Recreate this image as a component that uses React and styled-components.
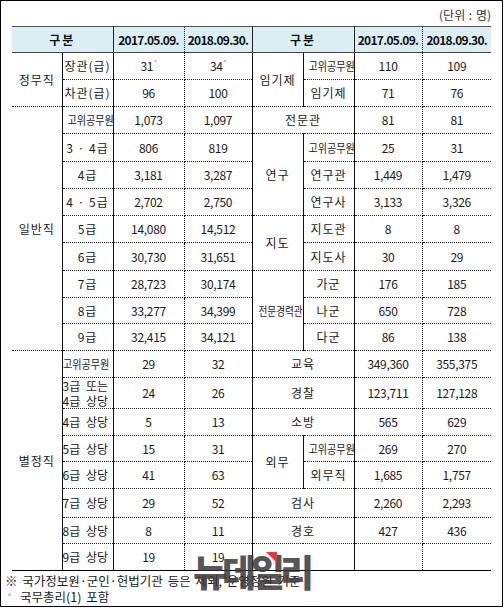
import React from "react";
import styled, { createGlobalStyle } from "styled-components";

// Global page reset

const GlobalStyle = createGlobalStyle`
  html, body {
    margin: 0;
    padding: 0;
    background: #fff;
  }
  body {
    font-family: "Noto Sans CJK KR", "Noto Sans", sans-serif;
    color: #1a1a1a;
  }
`;

// Styled Components

const Frame = styled.div`
  position: relative;
  box-sizing: border-box;
  width: 503px;
  height: 607px;
  border: 1px solid #000;
  overflow: hidden;
`;

const Unit = styled.div`
  height: 25px;
  width: 490px;
  font-size: 12px;
  line-height: 27px;
  text-align: right;
  color: #333;
  word-spacing: 1px;
`;

const Table = styled.table`
  margin-left: 11px;
  border-collapse: collapse;
  table-layout: fixed;
  width: 479px;
  font-size: 12px;
  line-height: 14px;
  border-top: 1px solid #555;
  border-bottom: 1px solid #000;
`;

const Col = styled.col`
  width: ${(p) => p.$w}px;
`;

const Row = styled.tr`
  height: ${(p) => p.$h}px;
`;

const Head = styled.th`
  padding: 0;
  background: #dbeef3;
  font-weight: bold;
  font-size: 12px;
  letter-spacing: ${(p) => p.$spacing ?? -0.7}px;
  color: #111;
  text-align: center;
  white-space: nowrap;
  border-bottom: 1px solid #444;
  border-right: ${(p) =>
    p.$right === "none" ? "none" : `1px ${p.$right} #222`};
`;

const Cell = styled.td`
  padding: 0;
  text-align: ${(p) => p.$align || "center"};
  vertical-align: middle;
  white-space: nowrap;
  overflow: visible;
  letter-spacing: ${(p) => p.$spacing || 0}px;
  word-spacing: ${(p) => (p.$align === "left" ? 3 : 0)}px;
  line-height: ${(p) => (p.$lines ? 15 : 14)}px;
  border-bottom: 1px dotted #222;
  border-right: ${(p) =>
    p.$right === "none" ? "none" : `1px ${p.$right} #111`};
`;

const Squeeze = styled.span`
  display: inline-block;
  letter-spacing: 0;
  transform: scaleX(${(p) => p.$scale || 0.84});
  transform-origin: ${(p) => (p.$align === "left" ? "left center" : "center")};
`;

const Mark = styled.sup`
  font-size: 9px;
  line-height: 0;
  vertical-align: 4px;
  margin-left: 1px;
`;

const Notes = styled.div`
  padding: 2px 0 0 4px;
  font-size: 12.5px;
  line-height: 16px;
  color: #1a1a1a;
  word-spacing: 2px;
`;

const SmallMark = styled.span`
  display: inline-block;
  width: 15px;
  padding-left: 3px;
  font-size: 10px;
  line-height: 12px;
  box-sizing: border-box;
`;

const Watermark = styled.div`
  position: absolute;
  left: 192px;
  top: 548px;
  font-size: 37px;
  font-weight: 900;
  letter-spacing: -5px;
  line-height: 44px;
  color: rgba(55, 55, 55, 0.85);
  pointer-events: none;
`;

const Wedge = styled.svg`
  position: absolute;
  left: 265px;
  top: 551px;
`;

// Table data

const heights = [27, 27, 27, 28, 27, 27, 27, 28, 27, 26, 27, 27, 31, 27, 26, 27, 29, 26, 27];

const leftRows = [
  { cat: "정무직", span: 2, sub: "장관(급)", a: "31", b: "34", mark: true },
  { sub: "차관(급)", a: "96", b: "100" },
  { cat: "일반직", span: 9, sub: "고위공무원", squeeze: true, a: "1,073", b: "1,097" },
  { sub: "3 · 4급", a: "806", b: "819" },
  { sub: "4급", a: "3,181", b: "3,287" },
  { sub: "4 · 5급", a: "2,702", b: "2,750" },
  { sub: "5급", a: "14,080", b: "14,512" },
  { sub: "6급", a: "30,730", b: "31,651" },
  { sub: "7급", a: "28,723", b: "30,174" },
  { sub: "8급", a: "33,277", b: "34,399" },
  { sub: "9급", a: "32,415", b: "34,121" },
  { cat: "별정직", span: 8, sub: "고위공무원", squeeze: true, left: true, a: "29", b: "32" },
  { sub: ["3급 또는", "4급 상당"], left: true, a: "24", b: "26" },
  { sub: "4급 상당", left: true, a: "5", b: "13" },
  { sub: "5급 상당", left: true, a: "15", b: "31" },
  { sub: "6급 상당", left: true, a: "41", b: "63" },
  { sub: "7급 상당", left: true, a: "29", b: "52" },
  { sub: "8급 상당", left: true, a: "8", b: "11" },
  { sub: "9급 상당", left: true, a: "19", b: "19" },
];

const rightRows = [
  { cat: "임기제", span: 2, sub: "고위공무원", squeeze: true, a: "110", b: "109" },
  { sub: "임기제", a: "71", b: "76" },
  { full: "전문관", a: "81", b: "81" },
  { cat: "연구", span: 3, sub: "고위공무원", squeeze: true, a: "25", b: "31" },
  { sub: "연구관", a: "1,449", b: "1,479" },
  { sub: "연구사", a: "3,133", b: "3,326" },
  { cat: "지도", span: 2, sub: "지도관", a: "8", b: "8" },
  { sub: "지도사", a: "30", b: "29" },
  { cat: "전문경력관", span: 3, catSqueeze: true, sub: "가군", a: "176", b: "185" },
  { sub: "나군", a: "650", b: "728" },
  { sub: "다군", a: "86", b: "138" },
  { full: "교육", a: "349,360", b: "355,375" },
  { full: "경찰", a: "123,711", b: "127,128" },
  { full: "소방", a: "565", b: "629" },
  { cat: "외무", span: 2, sub: "고위공무원", squeeze: true, a: "269", b: "270" },
  { sub: "외무직", a: "1,685", b: "1,757" },
  { full: "검사", a: "2,260", b: "2,293" },
  { full: "경호", a: "427", b: "436" },
  { full: "", a: "", b: "" },
];

// Component definition

function SubLabel({ item }) {
  if (Array.isArray(item.sub)) {
    return item.sub.map((line, i) => (
      <React.Fragment key={i}>
        {i > 0 && <br />}
        {line}
      </React.Fragment>
    ));
  }
  if (item.squeeze) {
    return (
      <Squeeze $align={item.left ? "left" : "center"}>{item.sub}</Squeeze>
    );
  }
  return item.sub;
}

function renderSide(item, side) {
  const cells = [];
  if (item.full !== undefined) {
    cells.push(
      <Cell key="full" colSpan={2} $right="solid" $spacing={1}>
        {item.full}
      </Cell>
    );
  } else {
    if (item.cat) {
      cells.push(
        <Cell key="cat" rowSpan={item.span} $right="solid" $spacing={item.catSqueeze ? 0 : 1}>
          {item.catSqueeze ? <Squeeze $scale={0.8}>{item.cat}</Squeeze> : item.cat}
        </Cell>
      );
    }
    cells.push(
      <Cell
        key="sub"
        $right="solid"
        $align={item.left ? "left" : "center"}
        $spacing={item.left ? 0 : 1}
        $lines={Array.isArray(item.sub)}
      >
        <SubLabel item={item} />
      </Cell>
    );
  }
  cells.push(
    <Cell key="a" $right="dotted" $spacing={-0.3}>
      {item.a}
      {item.mark && <Mark>˄</Mark>}
    </Cell>
  );
  cells.push(
    <Cell key="b" $right={side === "left" ? "solid" : "none"} $spacing={-0.3}>
      {item.b}
      {item.mark && <Mark>˄</Mark>}
    </Cell>
  );
  return cells;
}

function App() {
  return (
    <>
      <GlobalStyle />
      <Frame>
        <Unit>(단위 : 명)</Unit>
        <Table>
          <colgroup>
            <Col $w={50} />
            <Col $w={51} />
            <Col $w={71} />
            <Col $w={68} />
            <Col $w={51} />
            <Col $w={51} />
            <Col $w={68} />
            <Col $w={69} />
          </colgroup>
          <thead>
            <Row $h={26}>
              <Head colSpan={2} $right="solid" $spacing={2}>구분</Head>
              <Head $right="dotted">2017.05.09.</Head>
              <Head $right="solid">2018.09.30.</Head>
              <Head colSpan={2} $right="solid" $spacing={2}>구분</Head>
              <Head $right="dotted">2017.05.09.</Head>
              <Head $right="none">2018.09.30.</Head>
            </Row>
          </thead>
          <tbody>
            {leftRows.map((l, i) => (
              <Row key={i} $h={heights[i]}>
                {renderSide(l, "left")}
                {renderSide(rightRows[i], "right")}
              </Row>
            ))}
          </tbody>
        </Table>
        <Notes>
          <div>※ 국가정보원·군인·헌법기관 등은 제외, 운영정원 기준</div>
          <div>
            <SmallMark>˄</SmallMark>국무총리(1) 포함
          </div>
        </Notes>
        <Watermark>뉴데일리</Watermark>
        <Wedge width="11" height="11" viewBox="0 0 11 11">
          <polygon points="0,0 11,0 11,11" fill="#e0393e" />
        </Wedge>
      </Frame>
    </>
  );
}

export default App;
